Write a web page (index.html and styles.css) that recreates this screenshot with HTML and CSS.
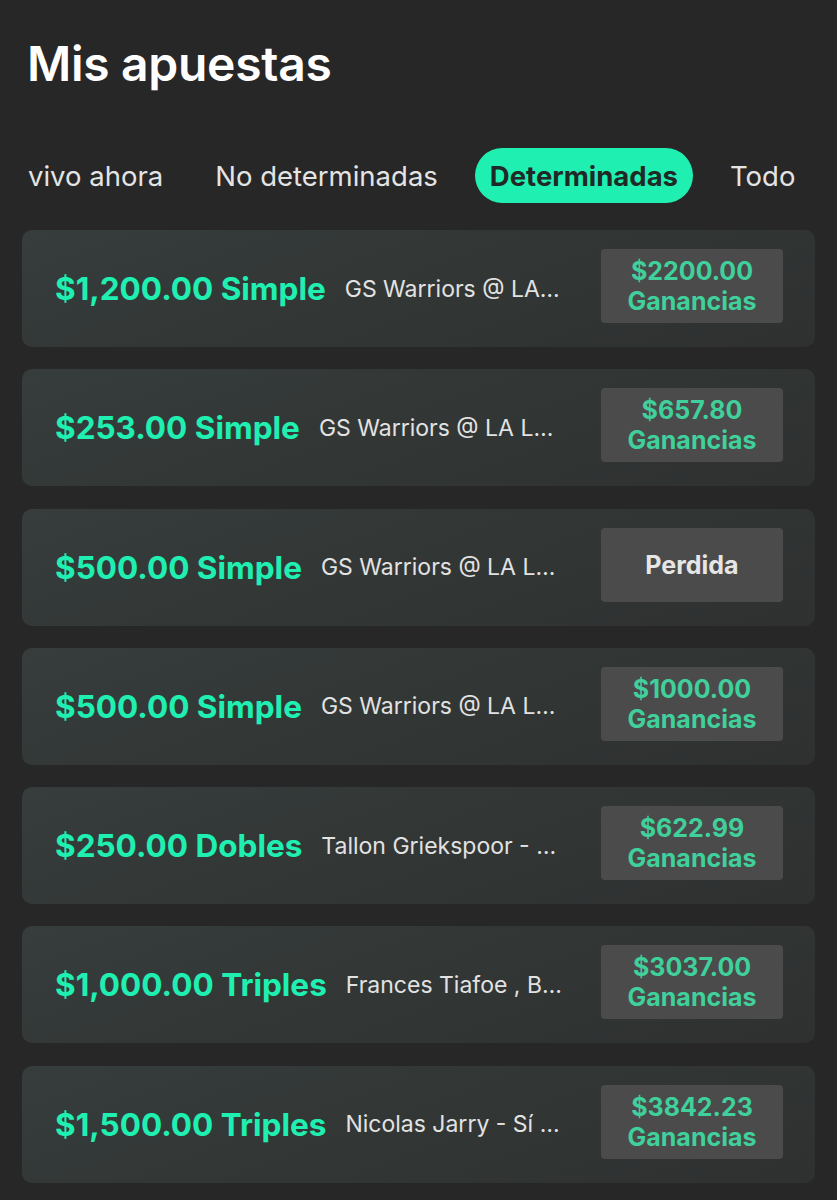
FILE: index.html
```html
<!DOCTYPE html>
<html lang="es">
<head>
  <meta charset="UTF-8">
  <meta name="viewport" content="width=device-width, initial-scale=1.0">
  <title>Mis apuestas</title>
  <link rel="stylesheet" href="styles.css">
</head>
<body>
  <h1 class="page-title">Mis apuestas</h1>

  <!-- Tabs -->
  <div class="tabs">
    <button class="tab">vivo ahora</button>
    <button class="tab">No determinadas</button>
    <button class="tab active">Determinadas</button>
    <button class="tab">Todo</button>
  </div>

  <!-- Bets -->
  <div class="bet-list">
    <div class="bet-card">
      <span class="bet-amount">$1,200.00 Simple</span>
      <span class="bet-event">GS Warriors @ LA Lakers</span>
      <div class="bet-result"><span>$2200.00</span><span>Ganancias</span></div>
    </div>
    <div class="bet-card">
      <span class="bet-amount">$253.00 Simple</span>
      <span class="bet-event">GS Warriors @ LA Lakers</span>
      <div class="bet-result"><span>$657.80</span><span>Ganancias</span></div>
    </div>
    <div class="bet-card">
      <span class="bet-amount">$500.00 Simple</span>
      <span class="bet-event">GS Warriors @ LA Lakers</span>
      <div class="bet-result lost"><span>Perdida</span></div>
    </div>
    <div class="bet-card">
      <span class="bet-amount">$500.00 Simple</span>
      <span class="bet-event">GS Warriors @ LA Lakers</span>
      <div class="bet-result"><span>$1000.00</span><span>Ganancias</span></div>
    </div>
    <div class="bet-card">
      <span class="bet-amount">$250.00 Dobles</span>
      <span class="bet-event">Tallon Griekspoor - Sí, Frances Tiafoe</span>
      <div class="bet-result"><span>$622.99</span><span>Ganancias</span></div>
    </div>
    <div class="bet-card">
      <span class="bet-amount">$1,000.00 Triples</span>
      <span class="bet-event">Frances Tiafoe , Ben Shelton</span>
      <div class="bet-result"><span>$3037.00</span><span>Ganancias</span></div>
    </div>
    <div class="bet-card">
      <span class="bet-amount">$1,500.00 Triples</span>
      <span class="bet-event">Nicolas Jarry - Sí , Tommy Paul</span>
      <div class="bet-result"><span>$3842.23</span><span>Ganancias</span></div>
    </div>
  </div>
</body>
</html>
```

FILE: styles.css
```css
/* General */
body {
  margin: 0;
  padding: 0;
  background-color: #272727;
  color: #fff;
  font-family: 'Inter', 'Liberation Sans', sans-serif;
  overflow: hidden;
}

.page-title {
  margin: 0;
  padding: 36px 27px 0;
  font-size: 48px;
  font-weight: 600;
  line-height: 56px;
  letter-spacing: -0.3px;
}

/* Tabs */
.tabs {
  display: flex;
  align-items: center;
  gap: 22px;
  margin: 56px 0 27px;
  padding-left: 13px;
}

.tab {
  font-family: inherit;
  font-size: 27.5px;
  color: #e4e4e4;
  background: none;
  border: none;
  padding: 0 15px;
  height: 55px;
  border-radius: 28px;
  white-space: nowrap;
}

.tab.active {
  background-color: #1ff0b2;
  color: #1f2a26;
  font-weight: 700;
}

/* Bet cards */
.bet-list {
  display: flex;
  flex-direction: column;
  gap: 22.3px;
  padding: 0 22px;
}

.bet-card {
  display: flex;
  align-items: center;
  height: 117px;
  padding: 0 32px 0 33px;
  border-radius: 10px;
  background: linear-gradient(160deg, #363d3c 0%, #313534 60%, #2f3131 100%);
}

.bet-amount {
  font-size: 31.5px;
  font-weight: 700;
  color: #1ff0b2;
  white-space: nowrap;
}

.bet-event {
  flex: 1;
  min-width: 0;
  margin: 0 38px 0 19px;
  font-size: 23px;
  color: #e2e2e2;
  white-space: nowrap;
  overflow: hidden;
  text-overflow: ellipsis;
}

.bet-result {
  display: flex;
  flex-direction: column;
  align-items: center;
  justify-content: center;
  width: 182px;
  height: 74px;
  margin-bottom: 5px;
  flex-shrink: 0;
  border-radius: 4px;
  background-color: #4b4b4b;
  color: #40d09c;
  font-size: 25px;
  font-weight: 700;
  line-height: 30px;
}

.bet-result.lost {
  color: #e6e6e6;
}
```
